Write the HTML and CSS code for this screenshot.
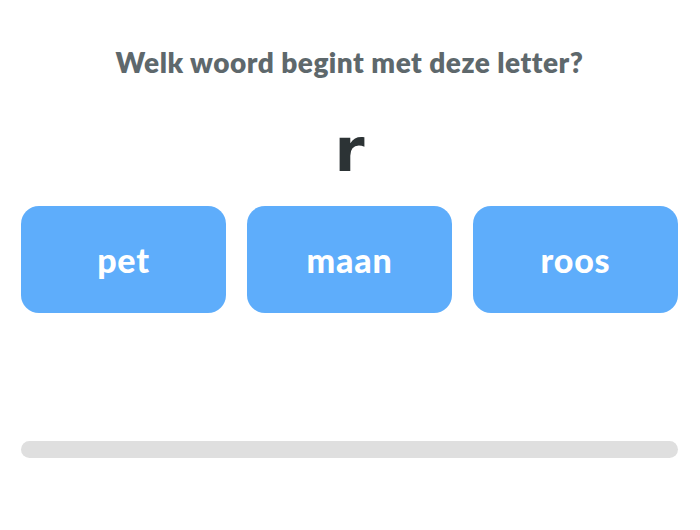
FILE: index.html
```html
<!DOCTYPE html>
<html lang="nl">
<head>
<meta charset="utf-8">
<link rel="stylesheet" href="styles.css">
</head>
<body>
<main class="quiz">
  <h1 class="question">Welk woord begint met deze letter?</h1>
  <div class="letter">r</div>
  <div class="options">
    <button class="option">pet</button>
    <button class="option">maan</button>
    <button class="option">roos</button>
  </div>
  <div class="progress"><div class="progress-fill" style="width:0%"></div></div>
</main>
</body>
</html>
```
FILE: styles.css
```css
html, body {
  margin: 0;
  padding: 0;
  background: #ffffff;
}
body {
  font-family: "Lato", "Noto Sans", sans-serif;
  width: 700px;
  height: 530px;
  overflow: hidden;
}
.quiz {
  padding: 42px 22px 0 21px;
  display: flex;
  flex-direction: column;
}
.question {
  margin: 0;
  text-align: center;
  font-size: 28px;
  font-weight: 800;
  letter-spacing: 0.5px;
  color: #5e686c;
  line-height: 40px;
}
.letter {
  margin-top: 33px;
  text-align: center;
  font-family: "DejaVu Sans", "Lato", sans-serif;
  font-size: 61px;
  font-weight: 700;
  color: #2c3335;
  line-height: 70px;
}
.options {
  margin-top: 21px;
  display: grid;
  grid-template-columns: repeat(3, 1fr);
  gap: 21px;
}
.option {
  height: 107px;
  border: none;
  border-radius: 18px;
  background: #5eadfb;
  color: #ffffff;
  font-family: inherit;
  font-size: 34px;
  font-weight: 900;
  letter-spacing: 0.8px;
  padding: 0;
}
.progress {
  margin-top: 128px;
  height: 17px;
  border-radius: 9px;
  background: #dfdfdf;
  overflow: hidden;
}
.progress-fill {
  height: 100%;
  background: #5eadfb;
}
```
